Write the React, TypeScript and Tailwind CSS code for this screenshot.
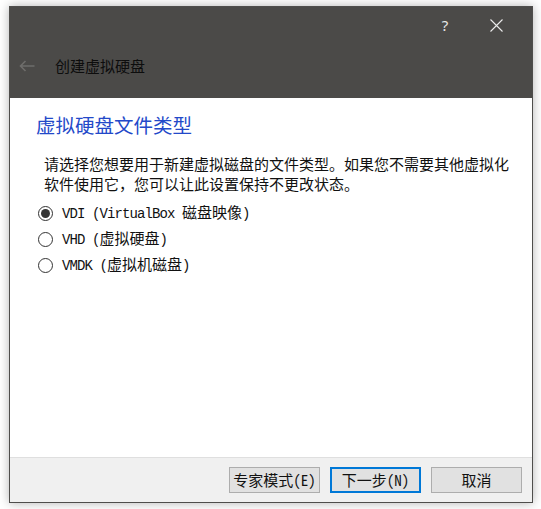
import { useState } from "react";

const songFont = {
  fontFamily: '"Noto Sans Mono CJK SC", "Liberation Mono", "Noto Sans CJK SC", monospace',
};

const latinFont = { fontFamily: '"Liberation Mono", monospace' };

const options = [
  { id: "vdi", latin: "VDI (VirtualBox ", cjk: "磁盘映像", end: ")" },
  { id: "vhd", latin: "VHD (", cjk: "虚拟硬盘", end: ")" },
  { id: "vmdk", latin: "VMDK (", cjk: "虚拟机磁盘", end: ")" },
];

function Radio({ checked }: { checked: boolean }) {
  return (
    <span className="w-[15px] h-[15px] rounded-full border border-[#333333] bg-white flex items-center justify-center shrink-0">
      {checked && <span className="w-[9px] h-[9px] rounded-full bg-[#333333]"></span>}
    </span>
  );
}

export default function App() {
  const [selected, setSelected] = useState("vdi");

  return (
    <div className="w-[541px] h-[509px] bg-white pt-[6px] pl-[9px]">
      <div className="w-[524px] h-[497px] flex flex-col border border-[#4f4e4c] shadow-[0_0_10px_rgba(0,0,0,0.3)]">
        {/* Header */}
        <div className="h-[91px] bg-[#4b4a48] flex flex-col">
          <div className="h-[36px] flex items-center justify-end pr-[26px] gap-[31px]">
            <span
              className="w-[20px] text-center text-[15px] text-[#e8e8e8] leading-none"
              style={{ fontFamily: '"Noto Sans", sans-serif' }}
            >
              ?
            </span>
            <span className="w-[20px] flex items-center justify-center">
              <svg width="13" height="13" viewBox="0 0 13 13">
                <path d="M0.5 0.5 L12.5 12.5 M12.5 0.5 L0.5 12.5" stroke="#ececec" strokeWidth="1.1" fill="none" />
              </svg>
            </span>
          </div>
          <div className="h-[46px] flex items-center pl-[9px] gap-[20px]">
            <svg width="16" height="12" viewBox="0 0 16 12">
              <path d="M15.5 6 H1.5 M6.5 1 L1.5 6 L6.5 11" stroke="#6e6d6b" strokeWidth="1.6" fill="none" />
            </svg>
            <span
              className="text-[15px] text-[#0d0d0d]"
              style={{ fontFamily: '"Noto Sans CJK SC", sans-serif' }}
            >
              创建虚拟硬盘
            </span>
          </div>
        </div>

        {/* Content */}
        <div className="flex-1 bg-white pt-[15px] pl-[26px]" style={songFont}>
          <div className="text-[19.5px] leading-[24px] text-[#2349c9]">虚拟硬盘文件类型</div>
          <p className="mt-[17px] ml-[8px] w-[470px] text-[15px] leading-[20px] text-[#111111]">
            请选择您想要用于新建虚拟磁盘的文件类型。如果您不需要其他虚拟化软件使用它，您可以让此设置保持不更改状态。
          </p>
          <div className="mt-[6px] ml-[2px] flex flex-col">
            {options.map((o) => (
              <label
                key={o.id}
                className="h-[26px] flex items-center gap-[9px] cursor-default"
                onClick={() => setSelected(o.id)}
              >
                <Radio checked={selected === o.id} />
                <span className="text-[15px] text-[#111111] whitespace-pre">
                  <span className="text-[14px] tracking-[-0.9px]" style={latinFont}>
                    {o.latin}
                  </span>
                  {o.cjk}
                  <span className="text-[14px] tracking-[-0.9px]" style={latinFont}>
                    {o.end}
                  </span>
                </span>
              </label>
            ))}
          </div>
        </div>

        {/* Footer */}
        <div className="h-[45px] border-t border-[#dfdfdf] bg-[#f0f0f0] flex items-center justify-end pr-[10px] gap-[10px]" style={songFont}>
          <button className="w-[91px] h-[26px] bg-[#e1e1e1] border border-[#adadad] text-[15px] text-[#111111]">
            专家模式(E)
          </button>
          <button className="w-[91px] h-[26px] bg-[#e1e1e1] border-2 border-[#0078d7] text-[15px] text-[#111111]">
            下一步(N)
          </button>
          <button className="w-[91px] h-[26px] bg-[#e1e1e1] border border-[#adadad] text-[15px] text-[#111111]">
            取消
          </button>
        </div>
      </div>
    </div>
  );
}
